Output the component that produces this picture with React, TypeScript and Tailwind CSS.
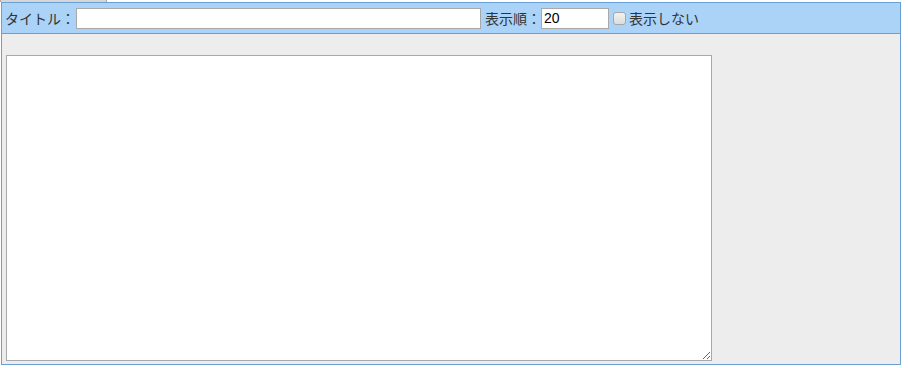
export default function App() {
  return (
    <div className="w-[908px] h-[368px] bg-white font-['Noto_Sans_CJK_JP','Liberation_Sans',sans-serif] text-[14px] text-[#333]">
      {/* edge of a tab above the panel */}
      <div className="w-[107px] h-[2px] bg-[#d6d6d6] border-x border-[#a8a8a8]" />

      <div className="ml-[1px] w-[900px] h-[363px] border border-[#6a9fd6] flex flex-col">
        <div className="h-[31px] shrink-0 bg-[#aad3f7] border-b border-[#6a9fd6] flex items-center pl-[3px] leading-none">
          <span className="w-[71px] whitespace-nowrap">タイトル：</span>
          <input
            type="text"
            className="w-[405px] h-[21px] bg-white border border-[#a9a9a9] px-[2px] outline-none"
          />
          <span className="ml-[4px] w-[56px] whitespace-nowrap">表示順：</span>
          <input
            type="text"
            defaultValue="20"
            className="w-[68px] h-[21px] bg-white border border-[#a9a9a9] px-[2px] text-[14px] text-black font-['Liberation_Sans',sans-serif] outline-none"
          />
          <label className="ml-[4px] flex items-center gap-[3px]">
            <span className="w-[13px] h-[13px] rounded-[3px] border border-[#a6a6a6] bg-gradient-to-b from-[#f2f2f2] to-[#dcdcdc]" />
            <span className="whitespace-nowrap">表示しない</span>
          </label>
        </div>

        <div className="flex-1 bg-[#ededed] pl-[4px] pt-[21px]">
          <textarea className="block w-[706px] h-[306px] bg-white border border-[#a9a9a9] resize outline-none" />
        </div>
      </div>
    </div>
  );
}
